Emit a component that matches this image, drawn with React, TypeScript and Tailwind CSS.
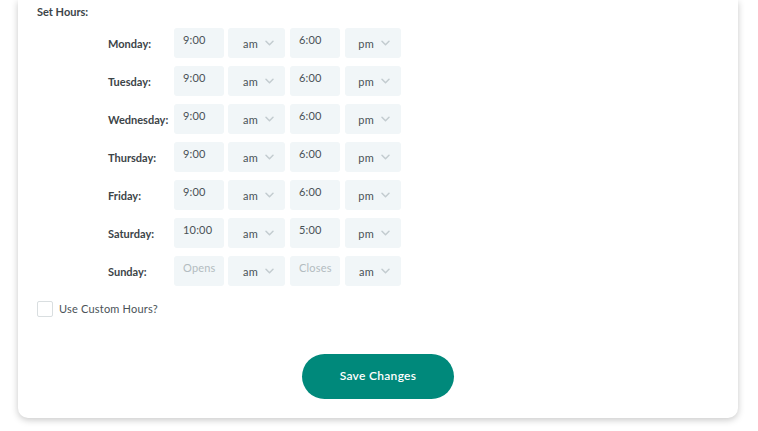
import React from 'react';

type Row = { day: string; open: string; openAp: string; close: string; closeAp: string };

const rows: Row[] = [
  { day: 'Monday:', open: '9:00', openAp: 'am', close: '6:00', closeAp: 'pm' },
  { day: 'Tuesday:', open: '9:00', openAp: 'am', close: '6:00', closeAp: 'pm' },
  { day: 'Wednesday:', open: '9:00', openAp: 'am', close: '6:00', closeAp: 'pm' },
  { day: 'Thursday:', open: '9:00', openAp: 'am', close: '6:00', closeAp: 'pm' },
  { day: 'Friday:', open: '9:00', openAp: 'am', close: '6:00', closeAp: 'pm' },
  { day: 'Saturday:', open: '10:00', openAp: 'am', close: '5:00', closeAp: 'pm' },
  { day: 'Sunday:', open: '', openAp: 'am', close: '', closeAp: 'am' },
];

function Chevron() {
  return (
    <svg width="9" height="6" viewBox="0 0 9 6" fill="none" className="shrink-0">
      <path d="M1 1.2l3.5 3.5L8 1.2" stroke="#c3ccd0" strokeWidth={1.5} strokeLinecap="round" strokeLinejoin="round" />
    </svg>
  );
}

function TimeBox({ value, placeholder }: { value: string; placeholder: string }) {
  return (
    <div className="w-[50px] h-[30px] rounded-[3px] bg-[#f1f6f8] pl-[9px] pt-[5px] text-[11px] leading-[14px] tracking-[0.2px]">
      {value ? <span className="text-[#4a5257]">{value}</span> : <span className="text-[#b3bcc0]">{placeholder}</span>}
    </div>
  );
}

function ApSelect({ value, w }: { value: string; w: string }) {
  return (
    <div className={`${w} h-[30px] rounded-[3px] bg-[#f1f6f8] flex items-center justify-end gap-[7px] pr-[11px] text-[11px] text-[#4a5257] tracking-[0.3px]`}>
      <span className="pt-[2px]">{value}</span>
      <Chevron />
    </div>
  );
}

export default function App() {
  return (
    <div className="min-h-[431px] bg-white pb-[13px]" style={{ fontFamily: 'Lato, "Open Sans", sans-serif' }}>
      <div className="ml-[18px] w-[720px] bg-white rounded-b-[10px] shadow-[0_2px_7px_rgba(0,0,0,0.22)] pl-[19px] pt-[5px] pb-[19px]">
        <div className="text-[11px] font-bold text-[#3c4448] leading-[14px]">Set Hours:</div>

        <div className="mt-[9px] ml-[71px] flex flex-col gap-[8px]">
          {rows.map((r) => (
            <div key={r.day} className="flex items-center h-[30px]">
              <div className="w-[66px] text-[11px] font-bold text-[#3c4448] pt-[2px]">{r.day}</div>
              <TimeBox value={r.open} placeholder="Opens" />
              <div className="ml-[4px]">
                <ApSelect value={r.openAp} w="w-[57px]" />
              </div>
              <div className="ml-[5px]">
                <TimeBox value={r.close} placeholder="Closes" />
              </div>
              <div className="ml-[5px]">
                <ApSelect value={r.closeAp} w="w-[56px]" />
              </div>
            </div>
          ))}
        </div>

        <div className="mt-[15px] flex items-center gap-[6px]">
          <div className="w-[16px] h-[16px] border border-[#d9dee0] rounded-[2px] bg-white" />
          <span className="text-[11px] text-[#4a5257] tracking-[0.2px]">Use Custom Hours?</span>
        </div>

        <div className="mt-[36px] flex justify-center pr-[19px]">
          <button className="w-[152px] h-[45px] rounded-full bg-[#00897b] text-white text-[12px] font-semibold tracking-[0.3px]">
            Save Changes
          </button>
        </div>
      </div>
    </div>
  );
}
